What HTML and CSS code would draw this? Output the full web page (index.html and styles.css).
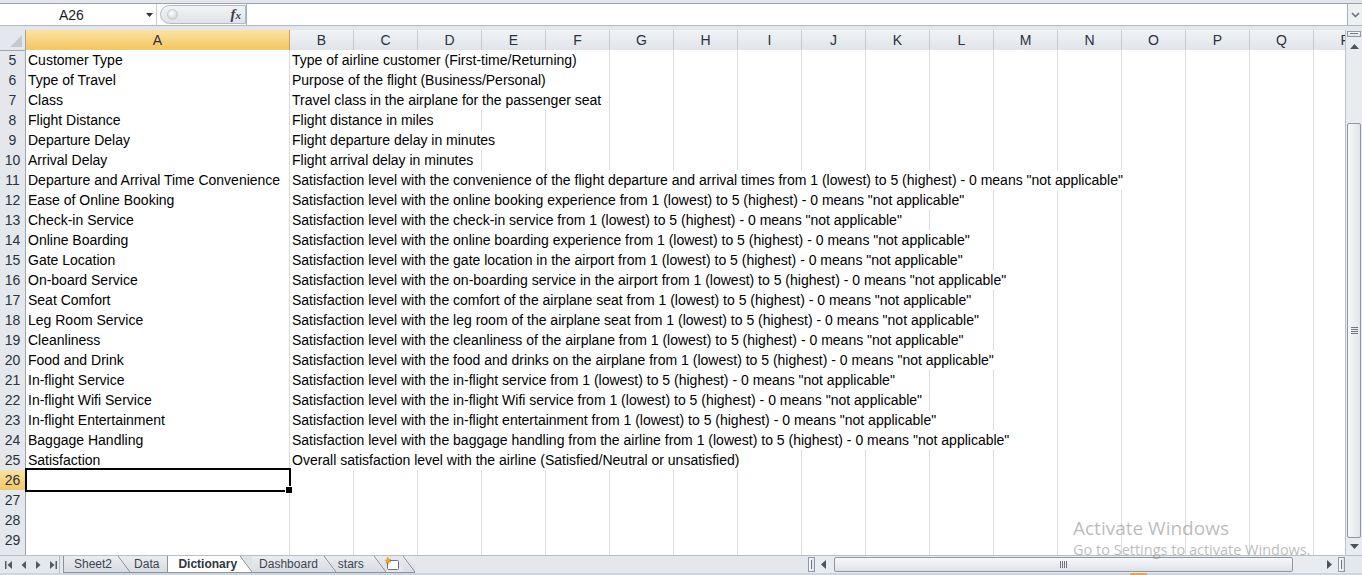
FILE: index.html
```html
<!DOCTYPE html>
<html>
<head>
<meta charset="utf-8">
<title>Dictionary</title>
<link rel="stylesheet" href="styles.css">
</head>
<body>
<div class="app">
  <div class="fbar">
    <div class="frow">
      <div class="namebox">
        <span class="nb-text">A26</span>
        <svg class="nb-arrow" width="7" height="4" viewBox="0 0 7 4"><path d="M0 0H7L3.5 4Z" fill="#333"/></svg>
      </div>
      <div class="pill">
        <span class="knob"></span>
        <span class="fx">f<span class="fx-x">x</span></span>
      </div>
      <div class="finput"></div>
      <div class="fexpand">
        <svg width="9" height="6" viewBox="0 0 9 6"><path d="M1 1L4.5 4.5L8 1" fill="none" stroke="#6b7480" stroke-width="1.6"/></svg>
      </div>
    </div>
  </div>

  <div class="sheet">
    <div class="grid">
      <div class="row hdr">
        <div class="rh corner"><span class="tri"></span></div>
        <div class="h on">A</div><div class="h">B</div><div class="h">C</div><div class="h">D</div><div class="h">E</div><div class="h">F</div><div class="h">G</div><div class="h">H</div><div class="h">I</div><div class="h">J</div><div class="h">K</div><div class="h">L</div><div class="h">M</div><div class="h">N</div><div class="h">O</div><div class="h">P</div><div class="h">Q</div><div class="h">R</div>
      </div>

      <div class="row"><div class="rh">5</div><div class="c">Customer Type</div><div class="c" style="grid-column: span 5">Type of airline customer (First-time/Returning)</div><i></i><i></i><i></i><i></i><i></i><i></i><i></i><i></i><i></i><i></i><i></i><i></i></div>
      <div class="row"><div class="rh">6</div><div class="c">Type of Travel</div><div class="c" style="grid-column: span 5">Purpose of the flight (Business/Personal)</div><i></i><i></i><i></i><i></i><i></i><i></i><i></i><i></i><i></i><i></i><i></i><i></i></div>
      <div class="row"><div class="rh">7</div><div class="c">Class</div><div class="c" style="grid-column: span 5">Travel class in the airplane for the passenger seat</div><i></i><i></i><i></i><i></i><i></i><i></i><i></i><i></i><i></i><i></i><i></i><i></i></div>
      <div class="row"><div class="rh">8</div><div class="c">Flight Distance</div><div class="c" style="grid-column: span 3">Flight distance in miles</div><i></i><i></i><i></i><i></i><i></i><i></i><i></i><i></i><i></i><i></i><i></i><i></i><i></i><i></i></div>
      <div class="row"><div class="rh">9</div><div class="c">Departure Delay</div><div class="c" style="grid-column: span 4">Flight departure delay in minutes</div><i></i><i></i><i></i><i></i><i></i><i></i><i></i><i></i><i></i><i></i><i></i><i></i><i></i></div>
      <div class="row"><div class="rh">10</div><div class="c">Arrival Delay</div><div class="c" style="grid-column: span 3">Flight arrival delay in minutes</div><i></i><i></i><i></i><i></i><i></i><i></i><i></i><i></i><i></i><i></i><i></i><i></i><i></i><i></i></div>
      <div class="row"><div class="rh">11</div><div class="c">Departure and Arrival Time Convenience</div><div class="c" style="grid-column: span 14">Satisfaction level with the convenience of the flight departure and arrival times from 1 (lowest) to 5 (highest) - 0 means "not applicable"</div><i></i><i></i><i></i></div>
      <div class="row"><div class="rh">12</div><div class="c">Ease of Online Booking</div><div class="c" style="grid-column: span 11">Satisfaction level with the online booking experience from 1 (lowest) to 5 (highest) - 0 means "not applicable"</div><i></i><i></i><i></i><i></i><i></i><i></i></div>
      <div class="row"><div class="rh">13</div><div class="c">Check-in Service</div><div class="c" style="grid-column: span 10">Satisfaction level with the check-in service from 1 (lowest) to 5 (highest) - 0 means "not applicable"</div><i></i><i></i><i></i><i></i><i></i><i></i><i></i></div>
      <div class="row"><div class="rh">14</div><div class="c">Online Boarding</div><div class="c" style="grid-column: span 11">Satisfaction level with the online boarding experience from 1 (lowest) to 5 (highest) - 0 means "not applicable"</div><i></i><i></i><i></i><i></i><i></i><i></i></div>
      <div class="row"><div class="rh">15</div><div class="c">Gate Location</div><div class="c" style="grid-column: span 11">Satisfaction level with the gate location in the airport from 1 (lowest) to 5 (highest) - 0 means "not applicable"</div><i></i><i></i><i></i><i></i><i></i><i></i></div>
      <div class="row"><div class="rh">16</div><div class="c">On-board Service</div><div class="c" style="grid-column: span 12">Satisfaction level with the on-boarding service in the airport from 1 (lowest) to 5 (highest) - 0 means "not applicable"</div><i></i><i></i><i></i><i></i><i></i></div>
      <div class="row"><div class="rh">17</div><div class="c">Seat Comfort</div><div class="c" style="grid-column: span 11">Satisfaction level with the comfort of the airplane seat from 1 (lowest) to 5 (highest) - 0 means "not applicable"</div><i></i><i></i><i></i><i></i><i></i><i></i></div>
      <div class="row"><div class="rh">18</div><div class="c">Leg Room Service</div><div class="c" style="grid-column: span 11">Satisfaction level with the leg room of the airplane seat from 1 (lowest) to 5 (highest) - 0 means "not applicable"</div><i></i><i></i><i></i><i></i><i></i><i></i></div>
      <div class="row"><div class="rh">19</div><div class="c">Cleanliness</div><div class="c" style="grid-column: span 11">Satisfaction level with the cleanliness of the airplane from 1 (lowest) to 5 (highest) - 0 means "not applicable"</div><i></i><i></i><i></i><i></i><i></i><i></i></div>
      <div class="row"><div class="rh">20</div><div class="c">Food and Drink</div><div class="c" style="grid-column: span 12">Satisfaction level with the food and drinks on the airplane from 1 (lowest) to 5 (highest) - 0 means "not applicable"</div><i></i><i></i><i></i><i></i><i></i></div>
      <div class="row"><div class="rh">21</div><div class="c">In-flight Service</div><div class="c" style="grid-column: span 10">Satisfaction level with the in-flight service from 1 (lowest) to 5 (highest) - 0 means "not applicable"</div><i></i><i></i><i></i><i></i><i></i><i></i><i></i></div>
      <div class="row"><div class="rh">22</div><div class="c">In-flight Wifi Service</div><div class="c" style="grid-column: span 10">Satisfaction level with the in-flight Wifi service from 1 (lowest) to 5 (highest) - 0 means "not applicable"</div><i></i><i></i><i></i><i></i><i></i><i></i><i></i></div>
      <div class="row"><div class="rh">23</div><div class="c">In-flight Entertainment</div><div class="c" style="grid-column: span 11">Satisfaction level with the in-flight entertainment from 1 (lowest) to 5 (highest) - 0 means "not applicable"</div><i></i><i></i><i></i><i></i><i></i><i></i></div>
      <div class="row"><div class="rh">24</div><div class="c">Baggage Handling</div><div class="c" style="grid-column: span 12">Satisfaction level with the baggage handling from the airline from 1 (lowest) to 5 (highest) - 0 means "not applicable"</div><i></i><i></i><i></i><i></i><i></i></div>
      <div class="row"><div class="rh">25</div><div class="c">Satisfaction</div><div class="c" style="grid-column: span 8">Overall satisfaction level with the airline (Satisfied/Neutral or unsatisfied)</div><i></i><i></i><i></i><i></i><i></i><i></i><i></i><i></i><i></i></div>
      <div class="row"><div class="rh on">26</div><div class="c sel"></div><i></i><i></i><i></i><i></i><i></i><i></i><i></i><i></i><i></i><i></i><i></i><i></i><i></i><i></i><i></i><i></i><i></i></div>
      <div class="row"><div class="rh">27</div><i></i><i></i><i></i><i></i><i></i><i></i><i></i><i></i><i></i><i></i><i></i><i></i><i></i><i></i><i></i><i></i><i></i><i></i></div>
      <div class="row"><div class="rh">28</div><i></i><i></i><i></i><i></i><i></i><i></i><i></i><i></i><i></i><i></i><i></i><i></i><i></i><i></i><i></i><i></i><i></i><i></i></div>
      <div class="row"><div class="rh">29</div><i></i><i></i><i></i><i></i><i></i><i></i><i></i><i></i><i></i><i></i><i></i><i></i><i></i><i></i><i></i><i></i><i></i><i></i></div>
      <div class="row"><div class="rh"></div><i></i><i></i><i></i><i></i><i></i><i></i><i></i><i></i><i></i><i></i><i></i><i></i><i></i><i></i><i></i><i></i><i></i><i></i></div>
    </div>

    <div class="vscroll">
      <div class="vsplit"></div>
      <div class="varrow"><svg width="9" height="5" viewBox="0 0 9 5"><path d="M0 5H9L4.5 0Z" fill="#4a5560"/></svg></div>
      <div class="vtrack">
        <div class="vthumb"><span class="grip-h"></span></div>
      </div>
      <div class="varrow"><svg width="9" height="5" viewBox="0 0 9 5"><path d="M0 0H9L4.5 5Z" fill="#4a5560"/></svg></div>
    </div>
  </div>

  <div class="tabbar">
    <div class="nav">
      <svg width="8" height="8" viewBox="0 0 8 8"><path d="M0 0H1.5V8H0Z M7 0V8L2.5 4Z" fill="#505a66"/></svg>
      <svg width="6" height="8" viewBox="0 0 6 8"><path d="M5 0V8L0.5 4Z" fill="#505a66"/></svg>
      <svg width="6" height="8" viewBox="0 0 6 8"><path d="M1 0V8L5.5 4Z" fill="#505a66"/></svg>
      <svg width="8" height="8" viewBox="0 0 8 8"><path d="M1 0V8L5.5 4Z M6.5 0H8V8H6.5Z" fill="#505a66"/></svg>
    </div>
    <div class="tabs">
      <span class="tab first">Sheet2</span>
      <span class="sep"></span>
      <span class="tab data">Data</span>
      <span class="tab active">Dictionary</span>
      <span class="sep after-active"></span>
      <span class="tab dash">Dashboard</span>
      <span class="sep"></span>
      <span class="tab stars">stars</span>
      <span class="sep"></span>
      <span class="tab newsheet">
        <svg width="16" height="14" viewBox="0 0 16 14">
          <rect x="3.5" y="3.5" width="11" height="9" rx="1" fill="#fff" stroke="#5f7186"/>
          <path d="M4 0.5L4.9 2.6L7 2L5.6 3.8L7.3 5.2L5.1 5.1L4.8 7.3L3.7 5.5L1.6 6.4L2.7 4.5L0.8 3.2L3 3L3 0.8Z" fill="#f2a42a" stroke="#d98a12" stroke-width="0.4"/>
        </svg>
      </span>
      <span class="sep"></span>
    </div>
    <div class="hscroll">
      <div class="hsplit"></div>
      <div class="harrow"><svg width="5" height="9" viewBox="0 0 5 9"><path d="M5 0V9L0 4.5Z" fill="#4a5560"/></svg></div>
      <div class="htrack">
        <div class="hthumb"><span class="grip-v"></span></div>
      </div>
      <div class="harrow"><svg width="5" height="9" viewBox="0 0 5 9"><path d="M0 0V9L5 4.5Z" fill="#4a5560"/></svg></div>
      <div class="hsplit"></div>
    </div>
    <div class="corner-box"></div>
  </div>
  <div class="status"><span class="task-item"></span></div>

  <div class="watermark">
    <div class="wm-title">Activate Windows</div>
    <div class="wm-sub">Go to Settings to activate Windows.</div>
  </div>
</div>
</body>
</html>
```

FILE: styles.css
```css
* {
  box-sizing: border-box;
  margin: 0;
  padding: 0;
}

html, body {
  width: 1362px;
  height: 575px;
  overflow: hidden;
}

body {
  font-family: "Liberation Sans", Arial, sans-serif;
  font-size: 14px;
  color: #000;
  background: #fff;
}

.app {
  position: relative;
  width: 1362px;
  height: 575px;
  display: flex;
  flex-direction: column;
}

/* ---------- formula bar ---------- */
.fbar {
  height: 30px;
  background: #e3e7ec;
  padding: 3px 0 4px 0;
}

.frow {
  display: flex;
  height: 23px;
  background: #fff;
  border-top: 1px solid #9aa2ad;
  border-bottom: 1px solid #b3bac3;
}

.namebox {
  width: 157px;
  display: flex;
  align-items: center;
  padding-left: 59px;
  border-right: 1px solid #c7cdd5;
}

.nb-text {
  font-size: 14px;
  color: #1a1a1a;
}

.nb-arrow {
  margin-left: 62px;
}

.pill {
  width: 86px;
  margin-left: 3px;
  margin-top: 1px;
  margin-bottom: 1px;
  display: flex;
  align-items: center;
  justify-content: space-between;
  padding: 0 4px 0 6px;
  background: linear-gradient(#f2f4f6, #dfe3e8);
  border: 1px solid #b2bac4;
  border-radius: 11px 0 0 11px;
}

.knob {
  width: 11px;
  height: 11px;
  border-radius: 50%;
  background: radial-gradient(circle at 40% 35%, #ffffff, #d3d8de 70%);
  border: 1px solid #c4cad2;
}

.fx {
  font-family: "Liberation Serif", "Times New Roman", serif;
  font-style: italic;
  font-weight: bold;
  font-size: 15px;
  color: #3a3f46;
  line-height: 1;
}

.fx-x {
  font-size: 11px;
}

.finput {
  flex: 1;
  border-left: 1px solid #a9b1bb;
}

.fexpand {
  width: 15px;
  border-left: 1px solid #a9b1bb;
  background: #eef1f4;
  display: flex;
  align-items: center;
  justify-content: center;
}

/* ---------- sheet ---------- */
.sheet {
  display: flex;
  height: 525px;
}

.grid {
  width: 1345px;
  flex: none;
  overflow: hidden;
}

.row {
  display: grid;
  grid-template-columns: 26px 264px repeat(17, 64px);
  height: 20px;
}

.row > * {
  border-right: 1px solid #dadcdd;
  border-bottom: 1px solid #dadcdd;
  white-space: nowrap;
  line-height: 19px;
  padding-top: 1px;
  padding-left: 2px;
  font-style: normal;
  background: #fff;
}

.row > .rh {
  background: #e4e8ed;
  border-right-color: #9ba5b1;
  border-bottom-color: #c5ccd4;
  text-align: center;
  padding-left: 0;
  color: #2a323b;
}

.row > .rh.on {
  background: linear-gradient(#fbe2a0, #f3c766);
  border-bottom-color: #d9b258;
}

.hdr > .h {
  background: linear-gradient(#f1f3f6, #e0e4e9);
  border-right-color: #c3c9d1;
  border-bottom-color: #9ba5b1;
  text-align: center;
  padding-left: 0;
  color: #2a323b;
}

.hdr > .h.on {
  background: linear-gradient(#fbe3a4, #f3c660);
  border-right-color: #c9a44d;
  border-bottom-color: #c29a3f;
}

.hdr > .corner {
  position: relative;
  background: #e4e8ed;
  border-bottom-color: #9ba5b1;
}

.corner .tri {
  position: absolute;
  right: 3px;
  bottom: 3px;
  width: 0;
  height: 0;
  border-left: 12px solid transparent;
  border-bottom: 12px solid #c3c9d1;
}

.sel {
  position: relative;
}

.sel::before {
  content: "";
  position: absolute;
  left: -1px;
  top: -2px;
  right: -2px;
  bottom: -2px;
  border: 2px solid #000;
}

.sel::after {
  content: "";
  position: absolute;
  right: -4px;
  bottom: -4px;
  width: 6px;
  height: 6px;
  background: #000;
  border: 1px solid #fff;
}

/* ---------- vertical scrollbar ---------- */
.vscroll {
  width: 17px;
  display: flex;
  flex-direction: column;
  align-items: center;
  background: #e8ebef;
  border-left: 1px solid #b9c0c9;
}

.vsplit {
  width: 14px;
  height: 6px;
  margin-top: 1px;
  margin-bottom: 1px;
  border: 1px solid #8f98a4;
  background: linear-gradient(#fafbfc, #dde1e6);
  position: relative;
}

.vsplit::after {
  content: "";
  position: absolute;
  left: 2px;
  right: 2px;
  top: 1px;
  height: 1px;
  background: #6f7884;
}

.varrow {
  height: 17px;
  width: 16px;
  display: flex;
  align-items: center;
  justify-content: center;
}

.vtrack {
  flex: 1;
  width: 16px;
  display: flex;
  flex-direction: column;
  align-items: center;
}

.vthumb {
  margin-top: 68px;
  width: 14px;
  height: 415px;
  border: 1px solid #8d96a2;
  border-radius: 2px;
  background: linear-gradient(to right, #f7f8fa, #e1e5ea);
  display: flex;
  align-items: center;
  justify-content: center;
}

.grip-h {
  width: 7px;
  height: 7px;
  background: repeating-linear-gradient(#6d7682 0 1px, transparent 1px 2px);
}

/* ---------- tab bar ---------- */
.tabbar {
  height: 18px;
  display: flex;
  background: #e4e8ed;
  border-top: 1px solid #b7bec7;
}

.nav {
  width: 60px;
  display: flex;
  align-items: center;
  gap: 8px;
  padding-left: 5px;
  border-right: 1px solid #b3bac3;
}

.tabs {
  width: 748px;
  display: flex;
  align-items: stretch;
  padding-left: 3px;
  font-size: 12px;
  color: #3b4550;
}

.tab {
  display: flex;
  align-items: center;
  background: linear-gradient(#e9ecf0, #d8dde3);
  border-bottom: 1px solid #8a949f;
  white-space: nowrap;
}

.tab.first {
  border-left: 1px solid #8a949f;
  padding: 0 6px 0 10px;
}

.tab.data {
  padding: 0 8px 0 4px;
}

.tab.active {
  background: #fff;
  font-weight: bold;
  color: #2d3640;
  border-left: 1px solid #8a949f;
  padding: 0 3px 0 10px;
}

.tab.dash {
  padding: 0 6px 0 7px;
}

.tab.stars {
  padding: 0 10px 0 2px;
}

.tab.newsheet {
  padding: 0 3px 0 0;
  margin-left: -2px;
  background: transparent;
}

.sep {
  width: 12px;
  background:
    linear-gradient(to top right, transparent calc(50% - 0.7px), #7f8995 50%, transparent calc(50% + 0.7px)),
    linear-gradient(#e9ecf0, #d8dde3);
  border-bottom: 1px solid #8a949f;
}

.sep.after-active {
  background:
    linear-gradient(to top right, transparent calc(50% - 0.7px), #7f8995 50%, transparent calc(50% + 0.7px)),
    linear-gradient(to top right, #fff 50%, #dfe3e8 50%);
}

.hscroll {
  width: 537px;
  display: flex;
  align-items: center;
  background: #e8ebef;
}

.hsplit {
  width: 7px;
  height: 15px;
  border: 1px solid #8f98a4;
  background: linear-gradient(to right, #fafbfc, #dde1e6);
  position: relative;
}

.hsplit::after {
  content: "";
  position: absolute;
  top: 2px;
  bottom: 2px;
  left: 2px;
  width: 1px;
  background: #6f7884;
}

.harrow {
  width: 17px;
  height: 16px;
  display: flex;
  align-items: center;
  justify-content: center;
}

.htrack {
  flex: 1;
  height: 16px;
  display: flex;
  align-items: center;
}

.hthumb {
  margin-left: 2px;
  width: 459px;
  height: 15px;
  border: 1px solid #8d96a2;
  border-radius: 2px;
  background: linear-gradient(#f7f8fa, #dde1e7);
  display: flex;
  align-items: center;
  justify-content: center;
}

.grip-v {
  width: 7px;
  height: 7px;
  background: repeating-linear-gradient(to right, #6d7682 0 1px, transparent 1px 2px);
}

.corner-box {
  flex: 1;
  background: #e4e8ed;
}

.status {
  height: 2px;
  background: #cfd5dc;
  position: relative;
}

.task-item {
  position: absolute;
  left: 1130px;
  top: 0;
  width: 17px;
  height: 2px;
  background: #e8a54a;
}

/* ---------- watermark ---------- */
.watermark {
  position: absolute;
  left: 1073px;
  top: 516px;
  font-family: "Open Sans", "Noto Sans", sans-serif;
  color: rgba(120, 120, 120, 0.5);
  pointer-events: none;
  white-space: nowrap;
}

.wm-title {
  font-size: 19px;
  line-height: 24px;
}

.wm-sub {
  font-size: 14.5px;
  line-height: 19px;
}
```
